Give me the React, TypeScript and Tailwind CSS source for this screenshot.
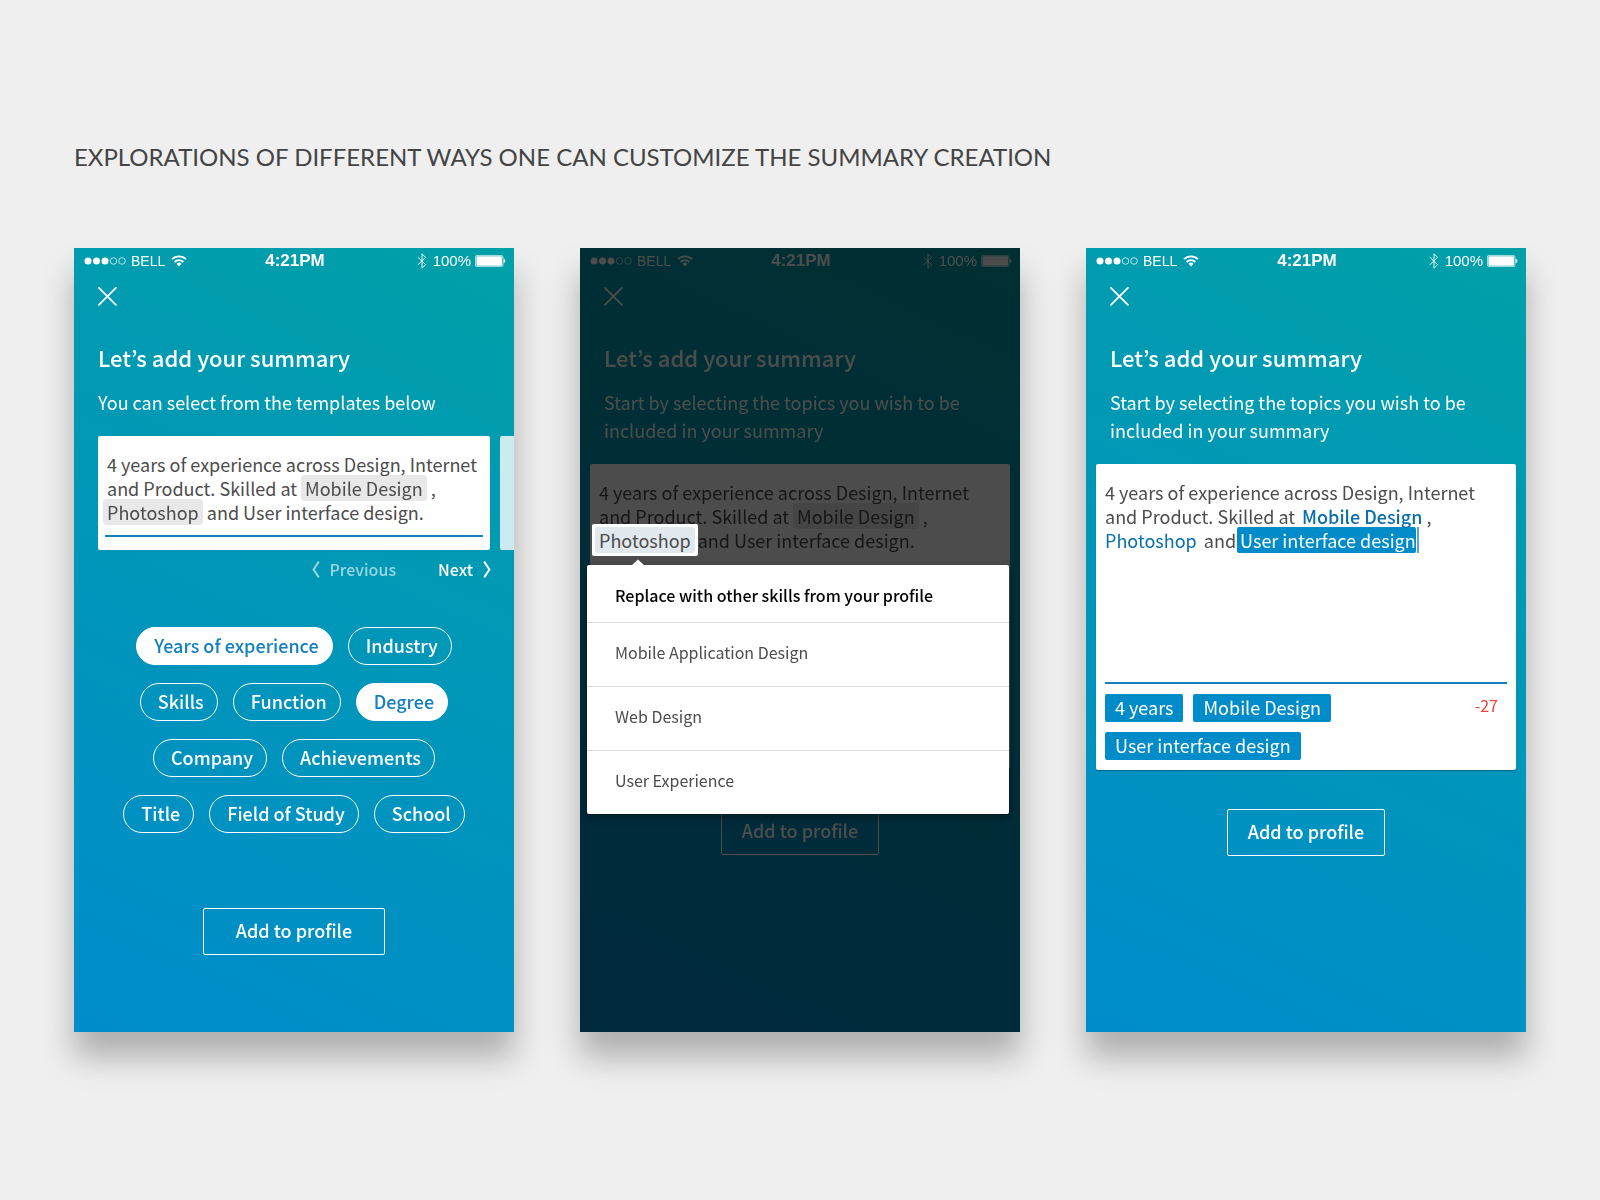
import React from "react";

const sans = "font-['Noto_Sans_CJK_KR',sans-serif]";

function StatusBar() {
  return (
    <div className="grid grid-cols-3 items-center pl-2.5 pr-2 pt-1 text-sm leading-4 font-['Liberation_Sans',sans-serif]">
      <div className="flex items-center gap-1">
        <svg width="43" height="8" viewBox="0 0 43 8" fill="currentColor" stroke="currentColor" aria-hidden="true">
          <circle cx="4" cy="4" r="3.5" stroke="none" />
          <circle cx="12.5" cy="4" r="3.5" stroke="none" />
          <circle cx="21" cy="4" r="3.5" stroke="none" />
          <circle cx="29.5" cy="4" r="3.3" fill="none" strokeWidth="0.7" />
          <circle cx="38" cy="4" r="3.3" fill="none" strokeWidth="0.7" />
        </svg>
        <span>BELL</span>
        <svg width="16" height="12" viewBox="0 0 16 12" fill="none" stroke="currentColor" strokeWidth="1.8" className="ml-0.5" aria-hidden="true">
          <path d="M1 4.2a10 10 0 0 1 14 0" />
          <path d="M3.6 7a6.2 6.2 0 0 1 8.800 0" />
          <path d="M8 11.4 5.5 8.800a3.5 3.5 0 0 1 5 0Z" fill="currentColor" stroke="none" />
        </svg>
      </div>
      <div className="text-center text-[17px] leading-[18px] font-bold">4:21PM</div>
      <div className="flex items-center justify-end">
        <svg width="10" height="16" viewBox="0 0 10 16" fill="none" stroke="currentColor" strokeWidth="0.9" className="mr-1.5" aria-hidden="true">
          <path d="M0.8 4.2 8.600 11.600 5 15.2V0.8l3.6 3.6L0.8 11.8" />
        </svg>
        <span className="text-[15px]">100%</span>
        <svg width="31" height="12" viewBox="0 0 31 12" fill="currentColor" className="ml-1" aria-hidden="true">
          <rect x="0.4" y="0.4" width="27.6" height="11.2" rx="1.6" fill="none" stroke="currentColor" strokeWidth="0.7" />
          <rect x="1.4" y="1.3" width="25.6" height="9.4" rx="0.8" />
          <path d="M28.7 3.8c1 .3 1.6 1.200 1.600 2.200s-.6 1.900-1.600 2.200Z" />
        </svg>
      </div>
    </div>
  );
}

function Phone({ intro, dimmed, children }: { intro: React.ReactNode; dimmed?: boolean; children: React.ReactNode }) {
  return (
    <section
      className={`${sans} relative isolate min-h-[784px] bg-linear-[25deg,#008ccb,#00a0a8] text-white shadow-[0_25px_30px_rgba(0,0,0,0.27)]`}
    >
      <StatusBar />
      <button type="button" aria-label="Close" className="mt-[17px] ml-6 block">
        <svg width="19" height="19" viewBox="0 0 19 19" fill="none" stroke="currentColor" strokeWidth="1.8" strokeLinecap="round">
          <path d="M0.900 0.900l17 17M17.900 0.900L0.900 17.900" />
        </svg>
      </button>
      <h2 className="mt-[33px] px-6 text-[22px] leading-9 font-medium">Let’s add your summary</h2>
      <p className="mt-[13px] px-6 text-lg leading-7">{intro}</p>
      {children}
      {dimmed && <div className="absolute inset-0 z-10 bg-black/70" />}
    </section>
  );
}

function Chip({ children }: { children: React.ReactNode }) {
  return (
    <button type="button" className="-my-px inline-block h-[26px] rounded-sm bg-[#e8e8e8] px-1 leading-[26px] mix-blend-multiply">
      {children}
    </button>
  );
}

function Pill({ label, on }: { label: string; on?: boolean }) {
  return (
    <button
      type="button"
      aria-pressed={!!on}
      className={
        "h-[38px] rounded-full border border-white pr-[13px] pb-0.5 pl-[17px] text-lg leading-[34px] font-medium " +
        (on ? "bg-white text-[#1480bd]" : "text-white")
      }
    >
      {label}
    </button>
  );
}

function AddButton({ wide }: { wide?: boolean }) {
  return (
    <button
      type="button"
      className={
        "mx-auto block rounded-xs border border-white pt-[9px] pb-3 text-lg leading-6 font-medium " +
        (wide ? "px-8" : "px-5")
      }
    >
      Add to profile
    </button>
  );
}

function Tag({ children }: { children: React.ReactNode }) {
  return (
    <button type="button" className="rounded-xs bg-[#008cc9] px-2.5 pb-0.5 leading-[26px] text-white">
      {children}
    </button>
  );
}

const pillRows = [
  ["Years of experience", "Industry"],
  ["Skills", "Function", "Degree"],
  ["Company", "Achievements"],
  ["Title", "Field of Study", "School"],
];
const selected = ["Years of experience", "Degree"];

function TemplatesScreen() {
  return (
    <Phone intro="You can select from the templates below">
      <div className="mt-5 flex gap-2.5 overflow-hidden pl-6">
        <div className="min-w-0 flex-1 rounded-xs bg-white px-[9px] pt-4 pb-[13px] text-lg leading-6 text-[#4c4c4c]">
          <p className="whitespace-nowrap">
            4 years of experience across Design, Internet
            <br />
            and Product. Skilled at <Chip>Mobile Design</Chip> ,
            <br />
            <span className="-ml-1">
              <Chip>Photoshop</Chip>
            </span>{" "}
            and User interface design.
          </p>
          <hr className="-mx-0.5 mt-[11px] border-t-2 border-[#1480bd]" />
        </div>
        <div className="w-3.5 rounded-l-xs bg-white/80" />
      </div>
      <div className="mt-[7px] flex justify-end gap-[42px] pr-[23px] text-base leading-6 font-medium">
        <button type="button" disabled className="flex items-center gap-2.5 text-white/60">
          <svg width="8" height="17" viewBox="0 0 8 17" fill="none" stroke="currentColor" strokeWidth="2" aria-hidden="true">
            <path d="M6.800 0.600 1.600 8.500l5.200 7.900" />
          </svg>
          Previous
        </button>
        <button type="button" className="flex items-center gap-2.5">
          Next
          <svg width="8" height="17" viewBox="0 0 8 17" fill="none" stroke="currentColor" strokeWidth="2" aria-hidden="true">
            <path d="M1.200 0.600 6.400 8.500l-5.200 7.900" />
          </svg>
        </button>
      </div>
      <div className="mt-[46px] mb-[75px] flex flex-col gap-[18px]">
        {pillRows.map((row) => (
          <div key={row[0]} className="flex justify-center gap-[15px]">
            {row.map((label) => (
              <Pill key={label} label={label} on={selected.includes(label)} />
            ))}
          </div>
        ))}
      </div>
      <AddButton wide />
    </Phone>
  );
}

const topicsIntro = "Start by selecting the topics you wish to be included in your summary";

function ReplaceScreen() {
  return (
    <Phone intro={topicsIntro} dimmed>
      <div className="mx-2.5 mt-5 mb-[39px] min-h-[305px] rounded-xs bg-white px-[9px] pt-4 text-lg leading-6 text-[#4c4c4c]">
        <p className="whitespace-nowrap">
          4 years of experience across Design, Internet
          <br />
          and Product. Skilled at <Chip>Mobile Design</Chip> ,
          <br />
          <span className="relative z-20 -my-1 -ml-[7px] inline-block rounded-xs bg-white p-[3px]">
            <button type="button" aria-expanded="true" className="block h-[26px] rounded-xs bg-[#e1e8ee] px-1 leading-[26px]">
              Photoshop
            </button>
          </span>
          and User interface design.
        </p>
        <div className="relative z-20">
          <div role="menu" className="absolute top-[13px] -right-2 -left-3 rounded-xs bg-white text-base shadow-[0_3px_8px_rgba(0,0,0,0.4)]">
            <svg width="14" height="7" viewBox="0 0 14 7" fill="white" className="absolute -top-1.5 left-11" aria-hidden="true">
              <path d="M0 7 7 0.500 14 7Z" />
            </svg>
            <h3 className="px-7 pt-[18px] pb-[15px] font-medium text-black">Replace with other skills from your profile</h3>
            {["Mobile Application Design", "Web Design", "User Experience"].map((s) => (
              <button key={s} type="button" role="menuitem" className="block w-full border-t border-[#d8d8d8] px-7 pt-[17px] pb-[22px] text-left">
                {s}
              </button>
            ))}
          </div>
        </div>
      </div>
      <AddButton />
    </Phone>
  );
}

function EditScreen() {
  return (
    <Phone intro={topicsIntro}>
      <div className="mx-2.5 mt-5 mb-[39px] rounded-xs bg-white px-[9px] pt-4 pb-2.5 text-lg leading-6 text-[#4c4c4c] shadow-[0_1px_1px_rgba(0,0,0,0.3)]">
        <div role="textbox" aria-label="Summary" className="min-h-[204px] border-b-2 border-[#1480bd] whitespace-nowrap">
          4 years of experience across Design, Internet
          <br />
          and Product. Skilled at <span className="relative pl-[3px] font-medium text-[#0b6fab]">Mobile Design</span> ,
          <br />
          <span className="pr-[3px] text-[#0b6fab]">Photoshop</span> and
          <span className="-my-px ml-px inline-block h-[26px] rounded-xs bg-[#008cc9] pl-[3px] leading-[26px] text-white">
            User interface design
          </span>
          <span className="ml-px border-l-2 border-[#5aa3dc]" />
        </div>
        <div className="mt-2.5 flex items-start justify-between pr-[9px]">
          <div className="flex flex-wrap gap-2.5">
            <Tag>4 years</Tag>
            <Tag>Mobile Design</Tag>
            <Tag>User interface design</Tag>
          </div>
          <output className="text-base leading-[22px] text-[#f0433a]">-27</output>
        </div>
      </div>
      <AddButton />
    </Phone>
  );
}

export default function App() {
  return (
    <main className="min-h-screen bg-[#efefef] px-[74px] pt-[139px] pb-20">
      <h1 className="text-2xl leading-9 text-[#444] font-['Lato',sans-serif]">
        EXPLORATIONS OF DIFFERENT WAYS ONE CAN CUSTOMIZE THE SUMMARY CREATION
      </h1>
      <div className="mt-[73px] grid grid-cols-3 gap-[66px]">
        <TemplatesScreen />
        <ReplaceScreen />
        <EditScreen />
      </div>
    </main>
  );
}
